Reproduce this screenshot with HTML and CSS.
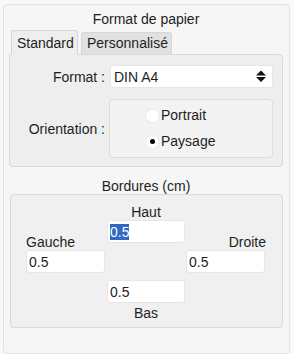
FILE: index.html
```html
<!DOCTYPE html>
<html lang="fr">
<head>
    <meta charset="UTF-8">
    <title>Format de papier</title>
    <link rel="stylesheet" href="styles.css">
</head>
<body>
    <div class="dialog">
        <div class="legend">Format de papier</div>

        <div class="tabs">
            <div class="tab active">Standard</div>
            <div class="tab">Personnalisé</div>
        </div>

        <div class="tab-panel">
            <div class="row">
                <label class="row-label" for="format">Format :</label>
                <div class="select-wrap">
                    <select id="format" class="select">
                        <option>DIN A4</option>
                        <option>DIN A3</option>
                        <option>Letter</option>
                    </select>
                    <svg class="select-arrow" width="10" height="12" viewBox="0 0 10 12">
                        <polygon points="0,5.5 5,0.5 10,5.5" fill="#111"/>
                        <polygon points="0,7 10,7 5,12" fill="#111"/>
                    </svg>
                </div>
            </div>

            <div class="row orient-row">
                <div class="row-label">Orientation :</div>
                <div class="orient-box">
                    <label class="radio"><input type="radio" name="orient"> Portrait</label>
                    <label class="radio"><input type="radio" name="orient" checked> Paysage</label>
                </div>
            </div>
        </div>

        <div class="legend legend-borders">Bordures (cm)</div>

        <div class="borders">
            <div class="b-label haut-label">Haut</div>
            <input class="b-input haut" id="haut" type="text" value="0.5">
            <div class="b-label gauche-label">Gauche</div>
            <div class="b-label droite-label">Droite</div>
            <input class="b-input gauche" type="text" value="0.5">
            <input class="b-input droite" type="text" value="0.5">
            <input class="b-input bas" type="text" value="0.5">
            <div class="b-label bas-label">Bas</div>
        </div>
    </div>

    <script>
        var haut = document.getElementById('haut');
        haut.focus();
        haut.select();
    </script>
</body>
</html>
```

FILE: styles.css
```css
body {
    margin: 0;
    background-color: #f9f9f9;
    font-family: "Liberation Sans", Arial, sans-serif;
    font-size: 14px;
    color: #1e1e1e;
}

.dialog {
    margin: 4px 0 0 3px;
    width: 287px;
    height: 350px;
    box-sizing: border-box;
    border: 1px solid #e2e2e2;
    border-radius: 4px;
    background-color: #f6f6f6;
    padding: 6px 6px 0 5px;
}

.legend {
    text-align: center;
    line-height: 16px;
    height: 16px;
}

.tabs {
    display: flex;
    align-items: flex-end;
    margin: 3px 0 -1px 2px;
    position: relative;
    z-index: 1;
}

.tab {
    box-sizing: border-box;
    height: 22px;
    line-height: 21px;
    margin: 0 0 1px 3px;
    padding: 0 5px;
    width: 91px;
    background-color: #e1e1e1;
    border: 1px solid #d6d6d6;
    border-bottom: none;
    border-radius: 3px 3px 0 0;
}

.tab.active {
    height: 25px;
    line-height: 24px;
    width: 67px;
    margin: 0;
    background-color: #eeeeee;
}

.tab-panel {
    width: 274px;
    box-sizing: border-box;
    border: 1px solid #d8d8d8;
    border-radius: 0 4px 4px 4px;
    background-color: #eeeeee;
    padding: 10px 9px 8px 0;
}

.row {
    display: flex;
    align-items: center;
}

.orient-row {
    margin-top: 11px;
}

.row-label {
    width: 95px;
    text-align: right;
    margin-right: 4px;
    flex-shrink: 0;
}

.select-wrap {
    position: relative;
    margin-left: 1px;
    width: 163px;
    height: 23px;
}

.select {
    appearance: none;
    -webkit-appearance: none;
    width: 100%;
    height: 100%;
    box-sizing: border-box;
    border: 1px solid #e6e6e6;
    border-radius: 3px;
    background-color: #ffffff;
    font-family: "Liberation Sans", Arial, sans-serif;
    font-size: 14px;
    color: #1e1e1e;
    padding: 0 0 0 3px;
    outline: none;
}

.select-arrow {
    position: absolute;
    right: 7px;
    top: 5px;
}

.orient-box {
    width: 164px;
    box-sizing: border-box;
    border: 1px solid #dedede;
    border-radius: 4px;
    background-color: #f3f3f3;
    padding: 2px 0 3px 36px;
}

.radio {
    display: flex;
    align-items: center;
    height: 26px;
}

.radio input {
    appearance: none;
    -webkit-appearance: none;
    width: 13px;
    height: 13px;
    margin: 0 2px 0 0;
    border-radius: 50%;
    background-color: #ffffff;
    box-shadow: 0 0 0 1px #ececec, inset 0 1px 1px #f0f0f0;
    position: relative;
    outline: none;
}

.radio input:checked::after {
    content: "";
    position: absolute;
    left: 4px;
    top: 4px;
    width: 5px;
    height: 5px;
    border-radius: 50%;
    background-color: #000000;
}

.legend-borders {
    margin-top: 11px;
}

.borders {
    margin: 0 0 0 1px;
    width: 273px;
    box-sizing: border-box;
    border: 1px solid #d8d8d8;
    border-radius: 4px;
    background-color: #f0f0f0;
    padding: 9px 0 6px 15px;
    display: grid;
    grid-template-columns: 80px 80px 80px;
    grid-template-rows: 16px 30px 23px 30px 18px;
}

.b-label {
    line-height: 16px;
}

.b-input {
    box-sizing: border-box;
    height: 23px;
    width: 79px;
    border: 1px solid #e6e6e6;
    border-radius: 3px;
    background-color: #ffffff;
    font-family: "Liberation Sans", Arial, sans-serif;
    font-size: 14px;
    color: #1e1e1e;
    padding: 0 0 0 2px;
    outline: none;
}

.b-input::selection {
    background-color: #3169c6;
    color: #ffffff;
}

.haut-label {
    grid-column: 2;
    grid-row: 1;
    text-align: center;
}

.haut {
    grid-column: 2;
    grid-row: 2;
    width: 78px;
    margin-left: 1px;
    align-self: start;
}

.gauche-label {
    grid-column: 1;
    grid-row: 2;
    align-self: end;
}

.droite-label {
    grid-column: 3;
    grid-row: 2;
    align-self: end;
    text-align: right;
}

.gauche {
    grid-column: 1;
    grid-row: 3;
}

.droite {
    grid-column: 3;
    grid-row: 3;
}

.bas {
    grid-column: 2;
    grid-row: 4;
    width: 78px;
    margin-left: 1px;
    align-self: end;
}

.bas-label {
    grid-column: 2;
    grid-row: 5;
    align-self: end;
    text-align: center;
}
```
